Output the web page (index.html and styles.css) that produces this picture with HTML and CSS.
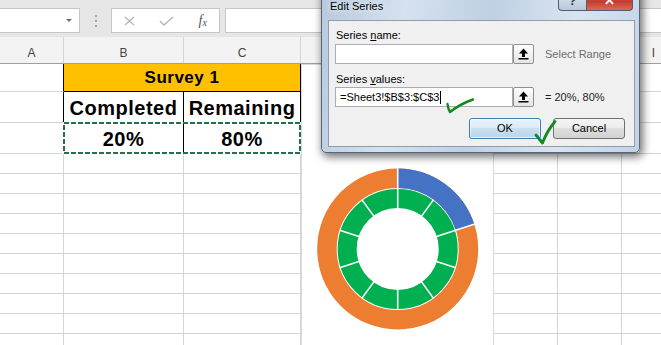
FILE: index.html
```html
<!DOCTYPE html>
<html lang="en">
<head>
  <meta charset="UTF-8" />
  <title>Edit Series</title>
  <link rel="stylesheet" href="styles.css">
</head>
<body>
  <div class="formula-bar">
    <div class="name-box"><span class="drop"></span></div>
    <div class="grip"><i></i><i></i><i></i></div>
    <div class="fn-box">
      <svg width="11" height="10" viewBox="0 0 11 10"><path d="M1 1 L10 9 M10 1 L1 9" stroke="#b5b5b5" stroke-width="1.3" fill="none"/></svg>
      <svg width="15" height="10" viewBox="0 0 15 10"><path d="M1 5 L5 9 L14 1" stroke="#b5b5b5" stroke-width="1.4" fill="none"/></svg>
      <span class="fx">f<sub>x</sub></span>
    </div>
    <div class="formula-input"></div>
  </div>

  <!-- D..H sit under the dialog, so their letters are left out -->
  <div class="col-heads">
    <div>A</div><div>B</div><div>C</div><div></div><div></div><div></div><div></div><div></div><div>I</div>
  </div>

  <div class="sheet" id="sheet">
    <!-- row 1 -->
    <div class="cell edge"></div>
    <div class="cell title">Survey 1</div>
    <div class="cell"></div><div class="cell"></div><div class="cell"></div>
    <div class="cell"></div><div class="cell"></div><div class="cell"></div>
    <!-- row 2 -->
    <div class="cell edge"></div>
    <div class="cell head">Completed</div>
    <div class="cell head">Remaining</div>
    <div class="cell"></div><div class="cell"></div><div class="cell"></div>
    <div class="cell"></div><div class="cell"></div><div class="cell"></div>
    <!-- row 3 -->
    <div class="cell edge"></div>
    <div class="selection">
      <div class="cell head">20%</div>
      <div class="cell head">80%</div>
      <svg class="ants" width="238" height="32" viewBox="0 0 238 32">
        <rect x="1" y="1" width="236" height="30" fill="none" stroke="#fff" stroke-width="2"/>
        <rect x="1" y="1" width="236" height="30" fill="none" stroke="#217346" stroke-width="2" stroke-dasharray="5 2"/>
      </svg>
    </div>
    <div class="cell"></div><div class="cell"></div><div class="cell"></div>
    <div class="cell"></div><div class="cell"></div><div class="cell"></div>
  </div>

  <div class="chart">
    <svg width="191" height="288" viewBox="0 0 191 288">
      <g transform="translate(95.7 184)">
        <circle r="70.75" fill="none" stroke="#ed7d31" stroke-width="19.5"/>
        <circle r="70.75" fill="none" stroke="#4472c4" stroke-width="19.5" stroke-dasharray="88.9 400" transform="rotate(-90)"/>
        <circle r="50.5" fill="none" stroke="#00b050" stroke-width="19"/>
        <g stroke="#fff" stroke-width="1.6">
          <line x1="0" y1="-60" x2="0" y2="-82"/>
          <line x1="57.06" y1="-18.54" x2="77.99" y2="-25.34"/>
          <line x1="0" y1="-40" x2="0" y2="-61"/>
          <line x1="23.51" y1="-32.36" x2="35.86" y2="-49.35"/>
          <line x1="38.04" y1="-12.36" x2="58.01" y2="-18.85"/>
          <line x1="38.04" y1="12.36" x2="58.01" y2="18.85"/>
          <line x1="23.51" y1="32.36" x2="35.86" y2="49.35"/>
          <line x1="0" y1="40" x2="0" y2="61"/>
          <line x1="-23.51" y1="32.36" x2="-35.86" y2="49.35"/>
          <line x1="-38.04" y1="12.36" x2="-58.01" y2="18.85"/>
          <line x1="-38.04" y1="-12.36" x2="-58.01" y2="-18.85"/>
          <line x1="-23.51" y1="-32.36" x2="-35.86" y2="-49.35"/>
        </g>
      </g>
    </svg>
  </div>

  <div class="dialog">
    <div class="dialog-title">Edit Series</div>
    <div class="win-buttons">
      <div class="win-btn help">?</div>
      <div class="win-btn close">✕</div>
    </div>
    <div class="client">
      <div class="label">Series <u>n</u>ame:</div>
      <div class="field-row">
        <div class="input"></div>
        <div class="pick">
          <svg width="11" height="12" viewBox="0 0 11 12"><path d="M5.5 0.5 L10 5.5 L7 5.5 L7 9 L4 9 L4 5.5 L1 5.5 Z" fill="#000"/><rect x="0.5" y="10" width="10" height="1.5" fill="#000"/></svg>
        </div>
        <span class="hint">Select Range</span>
      </div>
      <div class="label second">Series <u>v</u>alues:</div>
      <div class="field-row">
        <div class="input">=Sheet3!$B$3:$C$3<span class="caret"></span></div>
        <div class="pick">
          <svg width="11" height="12" viewBox="0 0 11 12"><path d="M5.5 0.5 L10 5.5 L7 5.5 L7 9 L4 9 L4 5.5 L1 5.5 Z" fill="#000"/><rect x="0.5" y="10" width="10" height="1.5" fill="#000"/></svg>
        </div>
        <span class="hint value">= 20%, 80%</span>
      </div>
      <div class="buttons">
        <div class="btn default">OK</div>
        <div class="btn">Cancel</div>
      </div>
    </div>
  </div>

  <!-- hand-drawn ticks on top of the screenshot -->
  <svg class="ticks" width="120" height="55" viewBox="0 0 120 55">
    <path d="M7.5 9 Q8 14 10 17 Q20 9 33 4.5" fill="none" stroke="#14891f" stroke-width="2.4" stroke-linecap="round" stroke-linejoin="round"/>
    <path d="M96 40 L102.5 48 Q107 36 115 26.5" fill="none" stroke="#14891f" stroke-width="2.8" stroke-linecap="round" stroke-linejoin="round"/>
  </svg>

  <script>
    // empty rows below the table
    const sheet = document.getElementById('sheet');
    for (let r = 4; r <= 13; r++) {
      for (let c = 0; c < 9; c++) {
        const cell = document.createElement('div');
        cell.className = 'cell';
        sheet.appendChild(cell);
      }
    }
  </script>
</body>
</html>
```

FILE: styles.css
```css
* {
  box-sizing: border-box;
}
:root {
  --cols: 64px 120px 117px 64px 65px 64px 64px 64px 64px;
}
body {
  margin: 0;
  width: 661px;
  height: 345px;
  overflow: hidden;
  position: relative;
  background: #fff;
  font-family: "Liberation Sans", Arial, sans-serif;
}

/* formula bar */
.formula-bar {
  display: flex;
  height: 37px;
  padding-top: 8px;
  background: #e6e6e6;
}
.name-box {
  width: 80px;
  height: 25px;
  background: #fff;
  border: 1px solid #c6c6c6;
  border-left: none;
  display: flex;
  align-items: center;
  justify-content: flex-end;
  padding-right: 7px;
}
.drop {
  width: 0;
  height: 0;
  border-left: 3px solid transparent;
  border-right: 3px solid transparent;
  border-top: 3px solid #6e6e6e;
}
.grip {
  width: 31px;
  height: 25px;
  display: flex;
  flex-direction: column;
  align-items: center;
  justify-content: center;
  gap: 3px;
}
.grip i {
  width: 2px;
  height: 2px;
  background: #a8a8a8;
}
.fn-box {
  width: 109px;
  height: 25px;
  background: #fff;
  border: 1px solid #c6c6c6;
  display: flex;
  align-items: center;
  justify-content: space-around;
}
.fx {
  font-family: "Liberation Serif", serif;
  font-style: italic;
  font-size: 14px;
  color: #555;
}
.fx sub {
  font-size: 10px;
  vertical-align: -1px;
}
.formula-input {
  flex: 1;
  margin-left: 5px;
  height: 25px;
  background: #fff;
  border: 1px solid #c6c6c6;
  border-right: none;
}

/* column headers */
.col-heads {
  display: grid;
  grid-template-columns: var(--cols);
  height: 27px;
  background: #f3f3f3;
  border-bottom: 1px solid #9f9f9f;
}
.col-heads div {
  border-right: 1px solid #d5d5d5;
  text-align: center;
  font-size: 12px;
  color: #444;
  padding-top: 6px;
  line-height: 20px;
}

/* cells */
.sheet {
  display: grid;
  grid-template-columns: var(--cols);
  grid-template-rows: 28px 31px 31px;
  grid-auto-rows: 20px;
}
.cell {
  border-right: 1px solid #d4d4d4;
  border-bottom: 1px solid #d4d4d4;
}
.cell.edge {
  border-right-color: #000;
}
.title {
  grid-column: span 2;
  background: #ffc000;
  border-color: #000;
  display: flex;
  align-items: flex-end;
  justify-content: center;
  padding-bottom: 3.5px;
  font-weight: bold;
  font-size: 17px;
  line-height: 20px;
  letter-spacing: 0.5px;
}
.head {
  border-color: #000;
  display: flex;
  align-items: flex-end;
  justify-content: center;
  padding-bottom: 2.5px;
  font-weight: bold;
  font-size: 20px;
  line-height: 23px;
  letter-spacing: 0.5px;
}
.selection {
  grid-column: span 2;
  display: flex;
  position: relative;
}
.selection .cell:first-child {
  width: 120px;
}
.selection .cell:nth-child(2) {
  width: 117px;
}
.ants {
  position: absolute;
  left: -1px;
  top: -1px;
}

/* chart */
.chart {
  position: absolute;
  left: 301px;
  top: 64px;
  width: 193px;
  height: 290px;
  background: #fff;
  border: 1px solid #d9d9d9;
}
.chart svg {
  display: block;
}

/* dialog */
.dialog {
  position: absolute;
  left: 321px;
  top: -10px;
  width: 319px;
  height: 163px;
  border: 1px solid #56657a;
  border-radius: 0 0 5px 5px;
  background: linear-gradient(100deg, #b7c9de 0%, #d5e1ee 25%, #bfd0e3 50%, #d9e4f0 75%, #c2d3e6 100%);
  box-shadow: 2px 3px 8px 1px rgba(0, 0, 0, 0.55);
  font-size: 11px;
}
.dialog-title {
  height: 29px;
  padding: 9px 0 0 8px;
  line-height: 13px;
  color: #000;
  text-shadow: 0 0 6px #fff;
}
.win-buttons {
  position: absolute;
  top: -1px;
  right: 6px;
  display: flex;
}
.win-btn {
  height: 21px;
  border: 1px solid #4f5e74;
  border-top: none;
  display: flex;
  align-items: center;
  justify-content: center;
  font-weight: bold;
}
.help {
  width: 29px;
  border-radius: 0 0 0 4px;
  background: linear-gradient(#dfe8f2, #b8c8da);
  color: #2d3a4a;
  font-size: 13px;
}
.close {
  width: 46px;
  border-left: none;
  border-radius: 0 0 4px 0;
  background: linear-gradient(#e8a493, #d0574a 45%, #c3392d 55%, #d86b54);
  color: #fff;
  font-size: 13px;
}
.client {
  margin: 0 4px 0 6px;
  height: 127px;
  background: #f0f0f0;
  border: 1px solid #8d9cb0;
  padding: 8px 9px 0 6px;
}
.label {
  line-height: 13px;
  padding-left: 1px;
  margin-bottom: 2px;
  color: #000;
}
.label.second {
  margin-top: 9px;
  margin-bottom: 1px;
}
.field-row {
  display: flex;
  align-items: center;
  height: 20px;
}
.input {
  width: 178px;
  height: 20px;
  background: #fff;
  border: 1px solid #abadb3;
  line-height: 18px;
  padding-left: 4px;
  color: #000;
}
.caret {
  display: inline-block;
  width: 1px;
  height: 13px;
  margin-left: 1px;
  background: #000;
  vertical-align: -3px;
}
.pick {
  width: 21px;
  height: 20px;
  border: 1px solid #8e8f8f;
  border-radius: 2px;
  background: linear-gradient(#fefefe, #e5e5e5);
  display: flex;
  align-items: center;
  justify-content: center;
}
.hint {
  margin-left: 11px;
  color: #6d6d6d;
}
.hint.value {
  color: #1e1e1e;
}
.buttons {
  display: flex;
  justify-content: flex-end;
  gap: 12px;
  margin-top: 11px;
}
.btn {
  width: 72px;
  height: 21px;
  border: 1px solid #707070;
  border-radius: 3px;
  line-height: 19px;
  text-align: center;
  color: #000;
  background: linear-gradient(#f4f4f4 0, #ececec 50%, #dedede 50%, #d2d2d2 100%);
}
.btn.default {
  border-color: #3c7fb1;
  background: linear-gradient(#e9f3fa 0, #dae9f5 50%, #c9deef 50%, #bcd6ec 100%);
  box-shadow: inset 0 0 0 1px rgba(255, 255, 255, 0.6);
}

.ticks {
  position: absolute;
  left: 440px;
  top: 95px;
}
```
